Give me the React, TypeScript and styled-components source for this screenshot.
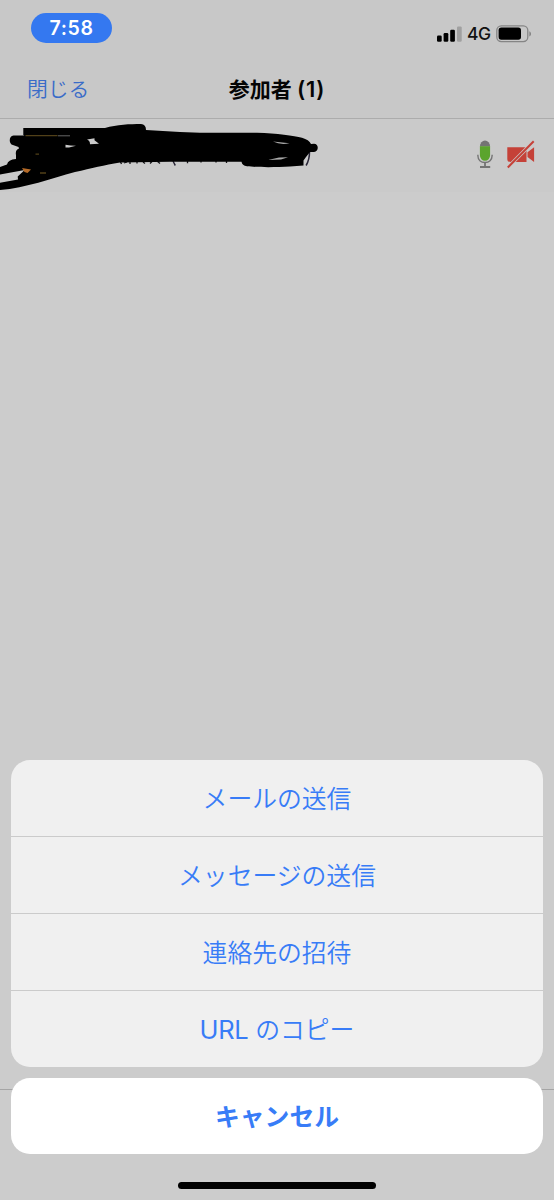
import React from "react";
import styled, { createGlobalStyle } from "styled-components";

const GlobalStyle = createGlobalStyle`
  * { box-sizing: border-box; }
  body {
    margin: 0;
    background: #cccccc;
    font-family: Inter, "Noto Sans CJK JP", sans-serif;
  }
  button { font-family: inherit; border: 0; padding: 0; background: none; }
`;

const Screen = styled.div`
  position: relative;
  width: 554px;
  height: 1200px;
  overflow: hidden;
  display: flex;
  flex-direction: column;
  background: #cccccc;
`;

const Header = styled.header`
  height: 119px;
  background: #c8c8c8;
  border-bottom: 1px solid #acacac;
`;

const StatusBar = styled.div`
  height: 59px;
  padding: 13px 22px 0 31px;
  display: flex;
  justify-content: space-between;
  align-items: flex-start;
`;

const TimePill = styled.div`
  width: 81px;
  height: 30px;
  border-radius: 15px;
  background: #3478f0;
  color: #fff;
  font-size: 19.5px;
  font-weight: 600;
  letter-spacing: 0.6px;
  line-height: 31px;
  text-align: center;
`;

const StatusIcons = styled.div`
  display: flex;
  align-items: center;
  height: 20px;
  margin-top: 11px;
`;

const Network = styled.span`
  width: 24px;
  margin: 0 5px 0 5px;
  font-size: 17.5px;
  font-weight: 500;
  line-height: 20px;
  letter-spacing: -0.4px;
  color: #111;
`;

const NavBar = styled.div`
  height: 60px;
  padding: 0 27px;
  display: grid;
  grid-template-columns: 1fr auto 1fr;
  align-items: center;
`;

const CloseButton = styled.button`
  justify-self: start;
  color: #3a6cc8;
  font-size: 20.8px;
  font-weight: 350;
  line-height: 30px;
  padding-top: 1px;
`;

const Title = styled.h1`
  margin: 0;
  font-size: 21px;
  font-weight: 600;
  line-height: 30px;
  color: #050505;
`;

const Count = styled.span`
  font-size: 22px;
  letter-spacing: 0.7px;
`;

const ParticipantRow = styled.div`
  height: 73px;
  display: flex;
  justify-content: space-between;
  background: #cacaca;
`;

const MediaIcons = styled.div`
  display: flex;
  padding: 20px 19px 0 0;
  gap: 14px;
`;

const Toolbar = styled.footer`
  margin-top: auto;
  height: 111px;
  border-top: 1px solid #a5a5a5;
`;

const Sheet = styled.div`
  position: absolute;
  inset: auto 0 0 0;
  padding: 0 11px 11px;
  display: flex;
  flex-direction: column;
`;

const ActionGroup = styled.div`
  border-radius: 19px;
  overflow: hidden;
  background: #f0f0f0;
  margin-bottom: 11px;
`;

const Action = styled.button<{ $strong?: boolean }>`
  display: block;
  width: 100%;
  height: ${(p) => (p.$strong ? "76px" : "77px")};
  border-radius: ${(p) => (p.$strong ? "19px" : "0")};
  background: ${(p) => (p.$strong ? "#fff" : "transparent")};
  color: #387cf7;
  font-size: 24.8px;
  font-weight: ${(p) => (p.$strong ? 700 : 350)};
  line-height: 74px;
  padding-top: 2px;
  text-align: center;

  ${ActionGroup} &:first-child {
    height: 76px;
  }
  ${ActionGroup} & + & {
    border-top: 1px solid #cbcbcb;
  }
`;

const Latin = styled.span`
  font-size: 25.5px;
  font-weight: 400;
  letter-spacing: -0.4px;
`;

const HomeIndicator = styled.div`
  width: 198px;
  height: 7px;
  margin: 28px auto 0;
  border-radius: 4px;
  background: #000;
`;

const Signal = () => (
  <svg width="25" height="16" viewBox="0 0 25 16">
    <rect x="0" y="9.5" width="4.7" height="6.2" rx="1.2" />
    <rect x="6.6" y="7" width="4.7" height="8.7" rx="1.2" />
    <rect x="13.2" y="3.8" width="4.7" height="11.9" rx="1.2" />
    <rect x="20" y="0.4" width="4.7" height="15.3" rx="1.2" fill="#a0a0a0" />
  </svg>
);

const Battery = () => (
  <svg width="36" height="18" viewBox="0 0 36 18">
    <rect x="0.8" y="0.8" width="31" height="15.8" rx="4.5" fill="none" stroke="#858585" strokeWidth="1.3" />
    <rect x="2.6" y="2.6" width="22.4" height="12.2" rx="2.7" />
    <path d="M33.3 6.2c2.3.7 2.3 4.4 0 5.2z" fill="#858585" />
  </svg>
);

const MicIcon = () => (
  <svg width="16" height="30" viewBox="0 0 16 30">
    <path d="M2.9 7.5a5.1 5.9 0 0 1 10.2 0z" fill="#747474" />
    <path d="M2.9 7.3h10.2v9a5.1 5.5 0 0 1-10.2 0z" fill="#5ba42d" />
    <path d="M.9 15.8v1c0 4 3 6.7 7.1 6.7s7.1-2.7 7.1-6.7v-1" fill="none" stroke="#747474" strokeWidth="1.4" />
    <path d="M8 23.5v4.2M3 28h10.2" fill="none" stroke="#747474" strokeWidth="1.8" />
  </svg>
);

const CameraOffIcon = () => (
  <svg width="28" height="30" viewBox="0 0 28 30">
    <path d="M.3 8.2h17.2a2 2 0 0 1 2 2v12.7H3.3a3 3 0 0 1-3-3zM20.5 13.2l6.6-5v14.7l-6.6-5z" fill="#c54138" />
    <path d="M.8 28.5 26.7 2.2" stroke="#cacaca" strokeWidth="3.4" />
    <path d="M.8 28.5 26.7 2.2" stroke="#c54138" strokeWidth="2" />
  </svg>
);

const Redaction = () => (
  <svg width="330" height="73" viewBox="0 119 330 73">
    <path
      d="M120 161l1.5 3M124 163l3-1M130 159v5M137 159v4.5M143 162l2 1.5M150 163.5l3-3M157 161l3 2.5M187.5 160v3.2M201 160v2.5M216 160v2.5M226.5 160v3"
      fill="none" stroke="#151518" strokeWidth="1.3"
    />
    <path d="M172.5 158q.5 4 2.8 7.5M309.5 150q.4 9-3.4 15.5" fill="none" stroke="#292637" strokeWidth="1.5" />
    <path d="M23.3 128H105C117 124.5 130 124 141 124q5 .5 5 6l34 2 20 .7h57c20 .5 37 3 45 5q7 2 9 6.2l3-.1c5 0 5 7.8 0 8.1h-4l-4 5-2.5 3.7v5L290 166.5C276 167.4 257 167.4 247 166.3Q242 165.5 241.5 161.8H170L120 162.5C104 165 92 168.3 75 172C51 178.4 26 188 0 190v-7.3l18-3.3-.3-3 7-6.5L0 174.5V167l7-2.5q1-5 9-5.5v-4q-1-5 3-6.5l-.5-1.5-7-2.5c-3-3-2-8.5 2-9h11l-1.2-.5z" />
    <path d="M25.5 135.6h32M35.5 154.2h3.5M40 173h6" stroke="#514019" strokeWidth="1.3" />
    <path d="M58 135.8h12" stroke="#666" />
    <path d="M22 168l9 1.5-3.5 3.4-3-.8z" fill="#b56a27" />
    <path d="M65.5 144.8q5 .8 10.5 1l-7 1.7h-3.5zM87 139.5l7.5-1.3v2l4.5 3.5-9 .5q0-3.5-3-4.7z" fill="#cacaca" />
    <path d="M273 141.5l16.5 1.8q-9 2-16.5-1.8zM268 160l11-2.5 9-.3-7 2.2z" fill="#aaa" />
  </svg>
);

const inviteActions: React.ReactNode[] = [
  "メールの送信",
  "メッセージの送信",
  "連絡先の招待",
  <><Latin>URL</Latin> のコピー</>,
];

export default function App() {
  return (
    <>
      <GlobalStyle />
      <Screen>
        <Header>
          <StatusBar>
            <TimePill>7:58</TimePill>
            <StatusIcons>
              <Signal />
              <Network>4G</Network>
              <Battery />
            </StatusIcons>
          </StatusBar>
          <NavBar>
            <CloseButton>閉じる</CloseButton>
            <Title>参加者 <Count>(1)</Count></Title>
          </NavBar>
        </Header>
        <ParticipantRow>
          <Redaction />
          <MediaIcons>
            <MicIcon />
            <CameraOffIcon />
          </MediaIcons>
        </ParticipantRow>
        <Toolbar />
        <Sheet>
          <ActionGroup>
            {inviteActions.map((label, i) => (
              <Action key={i}>{label}</Action>
            ))}
          </ActionGroup>
          <Action $strong>キャンセル</Action>
          <HomeIndicator />
        </Sheet>
      </Screen>
    </>
  );
}
